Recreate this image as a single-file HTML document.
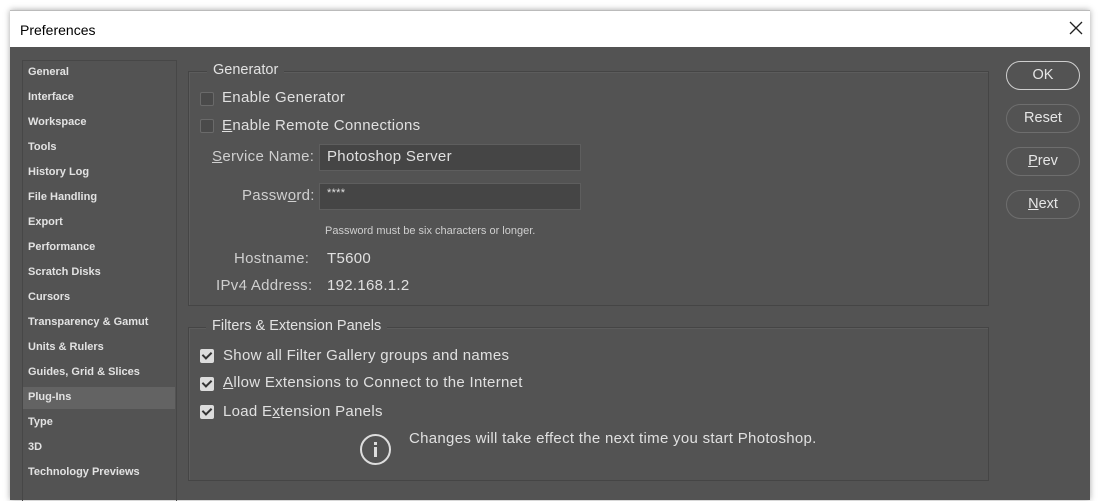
<!DOCTYPE html>
<html><head><meta charset="utf-8"><style>
body{margin:0;width:1102px;height:500px;background:#fff;position:relative;overflow:hidden;font-family:"Liberation Sans",sans-serif;}
.abs{position:absolute}
#win{left:10px;top:10px;width:1080px;height:490px;box-shadow:0 0 6px rgba(0,0,0,.35);}
#title{left:10px;top:10px;width:1080px;height:37px;background:#fff;border-top:1px solid #bbb;}
#title span{position:absolute;left:10px;top:11px;font-size:14px;color:#000}
#body{left:10px;top:47px;width:1080px;height:453px;background:#535353}
#side{left:22px;top:60px;width:153px;height:440px;border:1px solid #474747;border-bottom:none}
.it{position:absolute;left:5px;font-size:11px;font-weight:bold;color:#e2e2e2;white-space:nowrap}
#sel{left:23px;top:387px;width:152px;height:22px;background:#636363}
.grp{border:1px solid #454545;box-shadow:1px 1px 0 #5c5c5c inset}
.lg{position:absolute;background:#535353;padding:0 6px;font-size:14.5px;color:#e2e2e2;white-space:nowrap}
.t{position:absolute;font-size:15px;color:#e0e0e0;white-space:nowrap;letter-spacing:.3px}
.l{color:#cfcfcf}
.cb{position:absolute;width:12px;height:12px;border:1px solid #6a6a6a;background:#4a4a4a;border-radius:2px}
.cb.on{background:#dcdcdc;border-color:#dcdcdc}
.cb.on::after{content:"";position:absolute;left:3px;top:0px;width:4px;height:7px;border:solid #333;border-width:0 2px 2px 0;transform:rotate(45deg)}
.inp{position:absolute;left:319px;width:262px;height:27px;background:#454545;border:1px solid #5e5e5e;box-sizing:border-box}
.btn{position:absolute;left:1006px;width:74px;height:29px;border:1px solid #6e6e6e;border-radius:15px;box-sizing:border-box;text-align:center;line-height:27px;font-size:14.5px;color:#e6e6e6}
u{text-decoration:underline}
</style></head><body>
<div id="win" class="abs"></div>
<div id="title" class="abs"><span>Preferences</span>
<svg class="abs" style="left:1059px;top:10px" width="14" height="14"><path d="M1 1L13 13M13 1L1 13" stroke="#222" stroke-width="1.3"/></svg></div>
<div id="body" class="abs"></div>
<div id="side" class="abs"></div>
<div id="sel" class="abs"></div>
<div class="abs" style="left:23px;top:0;width:150px">
<div class="it" style="top:66px">General</div>
<div class="it" style="top:91px">Interface</div>
<div class="it" style="top:116px">Workspace</div>
<div class="it" style="top:141px">Tools</div>
<div class="it" style="top:166px">History Log</div>
<div class="it" style="top:191px">File Handling</div>
<div class="it" style="top:216px">Export</div>
<div class="it" style="top:241px">Performance</div>
<div class="it" style="top:266px">Scratch Disks</div>
<div class="it" style="top:291px">Cursors</div>
<div class="it" style="top:316px">Transparency &amp; Gamut</div>
<div class="it" style="top:341px">Units &amp; Rulers</div>
<div class="it" style="top:366px">Guides, Grid &amp; Slices</div>
<div class="it" style="top:391px">Plug-Ins</div>
<div class="it" style="top:416px">Type</div>
<div class="it" style="top:441px">3D</div>
<div class="it" style="top:466px">Technology Previews</div>
</div>

<div class="abs grp" style="left:188px;top:71px;width:799px;height:233px"></div>
<div class="lg" style="left:207px;top:62px">Generator</div>
<div class="cb" style="left:200px;top:92px"></div><div class="t" style="left:222px;top:89px">Enable Generator</div>
<div class="cb" style="left:200px;top:119px"></div><div class="t" style="left:222px;top:117px"><u>E</u>nable Remote Connections</div>
<div class="inp" style="top:144px"></div><div class="inp" style="top:183px"></div>
<div class="t l" style="left:212px;top:148px"><u>S</u>ervice Name:</div>
<div class="t" style="left:327px;top:148px">Photoshop Server</div>
<div class="t l" style="left:242px;top:187px">Passw<u>o</u>rd:</div>
<div class="t" style="left:327px;top:187px;font-size:11px">****</div>
<div class="t l" style="left:325px;top:225px;font-size:11px;letter-spacing:0">Password must be six characters or longer.</div>
<div class="t l" style="left:234px;top:250px">Hostname:</div><div class="t" style="left:327px;top:250px">T5600</div>
<div class="t l" style="left:216px;top:277px">IPv4 Address:</div><div class="t" style="left:327px;top:277px">192.168.1.2</div>

<div class="abs grp" style="left:188px;top:327px;width:799px;height:152px"></div>
<div class="lg" style="left:206px;top:318px">Filters &amp; Extension Panels</div>
<div class="cb on" style="left:200px;top:349px"></div><div class="t" style="left:223px;top:347px">Show all Filter Gallery groups and names</div>
<div class="cb on" style="left:200px;top:377px"></div><div class="t" style="left:223px;top:374px"><u>A</u>llow Extensions to Connect to the Internet</div>
<div class="cb on" style="left:200px;top:405px"></div><div class="t" style="left:223px;top:403px">Load E<u>x</u>tension Panels</div>
<svg class="abs" style="left:359px;top:433px" width="34" height="34"><circle cx="16.5" cy="16.5" r="14.5" fill="none" stroke="#ddd" stroke-width="2"/><rect x="15" y="14" width="3" height="10" fill="#ddd"/><rect x="15" y="9" width="3" height="3" fill="#ddd"/></svg>
<div class="t" style="left:409px;top:430px">Changes will take effect the next time you start Photoshop.</div>

<div class="btn" style="top:61px;border-color:#cfcfcf;border-width:1.5px">OK</div>
<div class="btn" style="top:104px">Reset</div>
<div class="btn" style="top:147px"><u>P</u>rev</div>
<div class="btn" style="top:190px"><u>N</u>ext</div>
</body></html>
